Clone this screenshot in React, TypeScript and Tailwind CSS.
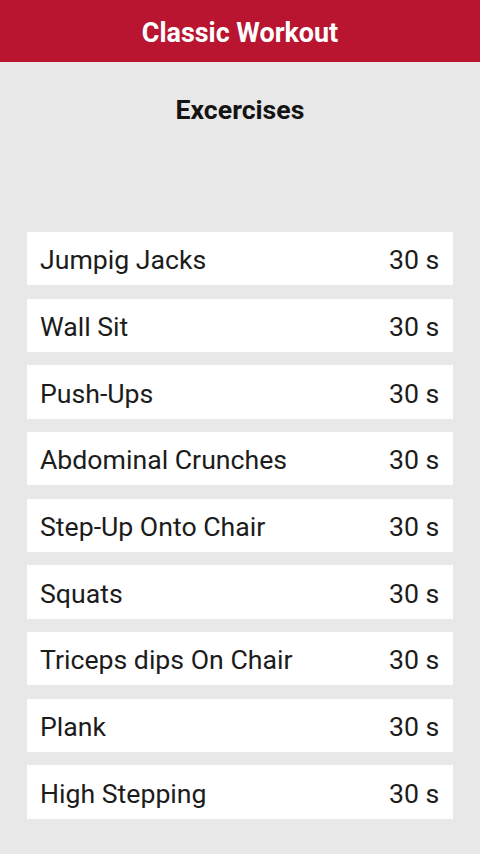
import React from "react";

const items = [
  "Jumpig Jacks",
  "Wall Sit",
  "Push-Ups",
  "Abdominal Crunches",
  "Step-Up Onto Chair",
  "Squats",
  "Triceps dips On Chair",
  "Plank",
  "High Stepping",
];

export default function App() {
  return (
    <div
      className="w-[480px] h-[854px] bg-[#e8e8e8] flex flex-col"
      style={{ fontFamily: "Roboto, 'Liberation Sans', sans-serif" }}
    >
      <div className="h-[62px] bg-[#ba1530] flex items-center justify-center shrink-0 pt-[5px]">
        <span className="text-white font-bold text-[26.9px] leading-none">Classic Workout</span>
      </div>
      <div className="h-[94px] flex items-center justify-center pt-[2px]">
        <span className="text-[#141414] font-bold text-[26.67px] leading-none">Excercises</span>
      </div>
      <div className="mt-[76px] flex flex-col gap-[13.33px] px-[26.67px]">
        {items.map((t) => (
          <div
            key={t}
            className="h-[53.33px] bg-white flex items-center justify-between pl-[13.33px] pr-[14px] pt-[4px] text-[26.67px] leading-none text-[#1c1c1c]"
          >
            <span>{t}</span>
            <span>30 s</span>
          </div>
        ))}
      </div>
    </div>
  );
}
